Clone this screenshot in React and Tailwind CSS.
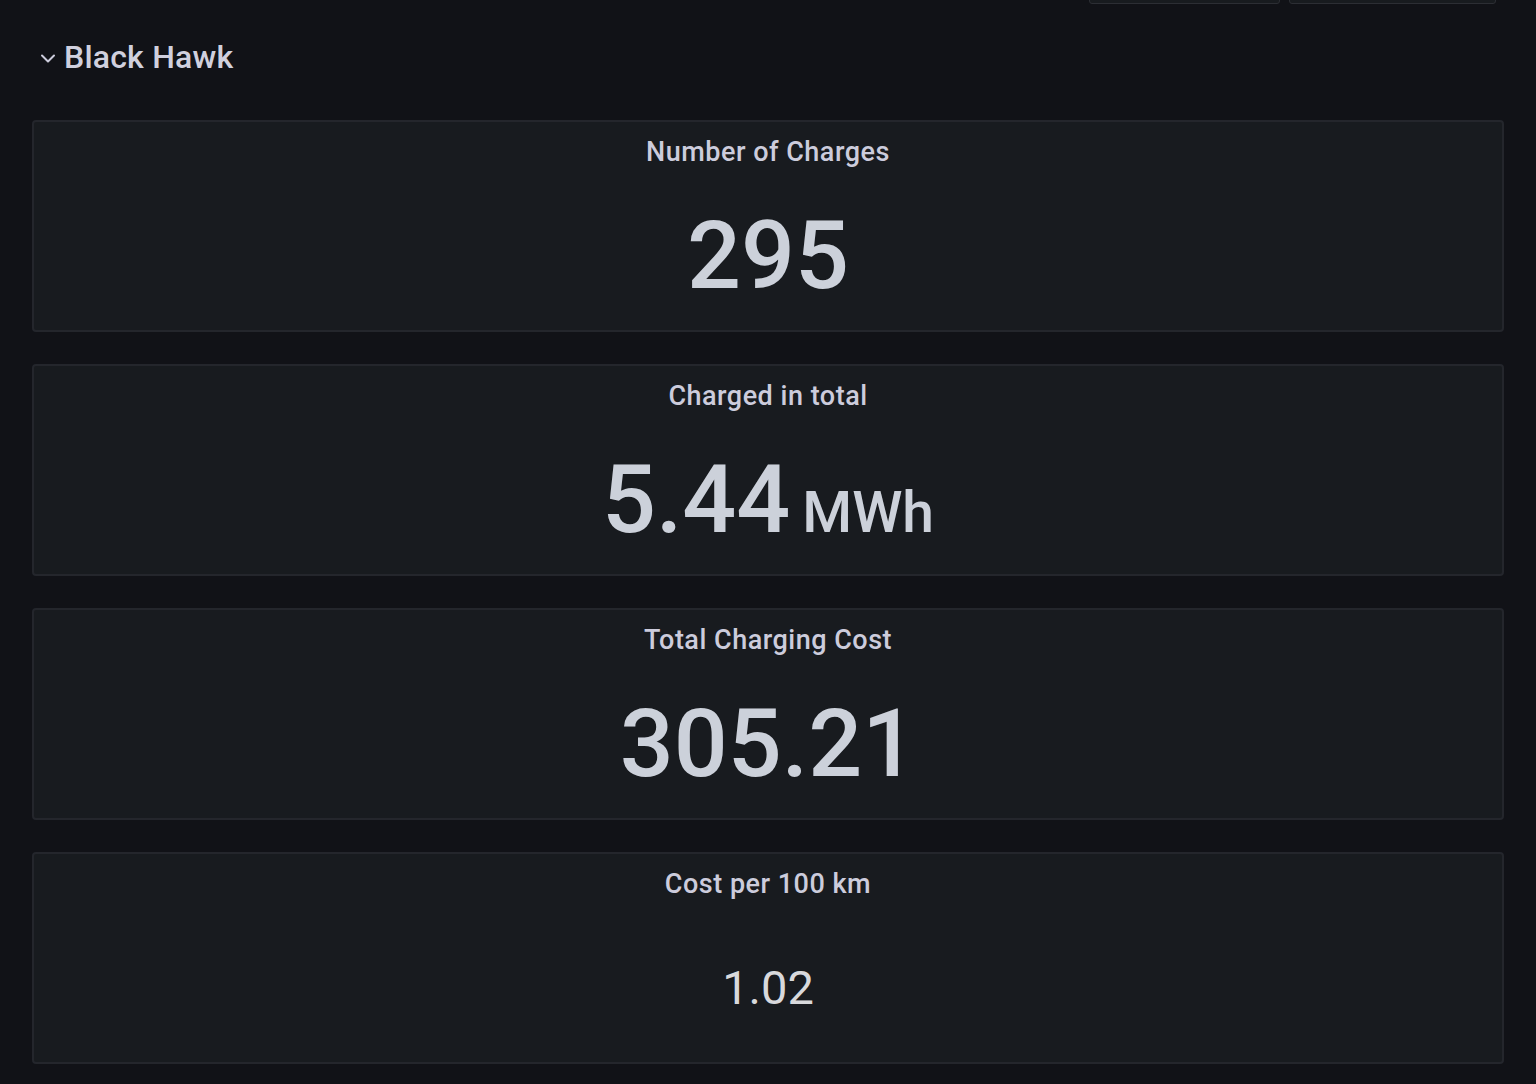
export default function App() {
  const panels = [
    { title: 'Number of Charges', value: '295' },
    { title: 'Charged in total', value: '5.44', unit: 'MWh' },
    { title: 'Total Charging Cost', value: '305.21' },
    { title: 'Cost per 100 km', value: '1.02', small: true },
  ];

  return (
    <div className="min-h-[1084px] bg-[#111217] text-[#ccccdc]" style={{ fontFamily: 'Roboto, "Noto Sans", sans-serif' }}>
      {/* toolbar buttons cut at the top edge */}
      <div className="h-[4px] overflow-hidden flex justify-end items-end gap-[9px] pr-[40px]">
        <div className="w-[191px] h-[40px] shrink-0 rounded-[3px] border border-[#2c2e34] bg-[#181b1f]" />
        <div className="w-[207px] h-[40px] shrink-0 rounded-[3px] border border-[#2c2e34] bg-[#181b1f]" />
      </div>

      <div className="px-[32px]">
        <div className="flex items-center h-[60px] mt-[23px] mb-[33px] gap-[7px] pl-[7px]">
          <svg width="18" height="18" viewBox="0 0 18 18" fill="none" className="mt-[2px]">
            <path d="M3 6.5l6 6 6-6" stroke="#ccccdc" strokeWidth="2" strokeLinecap="round" strokeLinejoin="round" />
          </svg>
          <span className="text-[32px] font-medium tracking-[0.2px] text-[#d0d0de]">Black Hawk</span>
        </div>

        <div className="flex flex-col gap-[32px]">
          {panels.map((p, i) => (
            <div key={i} className="h-[212px] rounded-[4px] border-2 border-[#24262c] bg-[#181b1f] flex flex-col">
              <div className="h-[62px] flex items-center justify-center pb-[2px]">
                <span className="text-[27px] font-medium tracking-[0.5px] text-[#ccccdc]">{p.title}</span>
              </div>
              <div className="flex-1 flex items-center justify-center pb-[4px]">
                {p.small ? (
                  <span className="text-[47px] leading-none font-normal text-[#d8d9dc]">{p.value}</span>
                ) : (
                  <span className="flex items-baseline leading-none text-[#ccd1da]">
                    <span className="text-[95px] font-medium">{p.value}</span>
                    {p.unit && <span className="text-[57px] font-medium ml-[12px]">{p.unit}</span>}
                  </span>
                )}
              </div>
            </div>
          ))}
        </div>
      </div>
    </div>
  );
}
